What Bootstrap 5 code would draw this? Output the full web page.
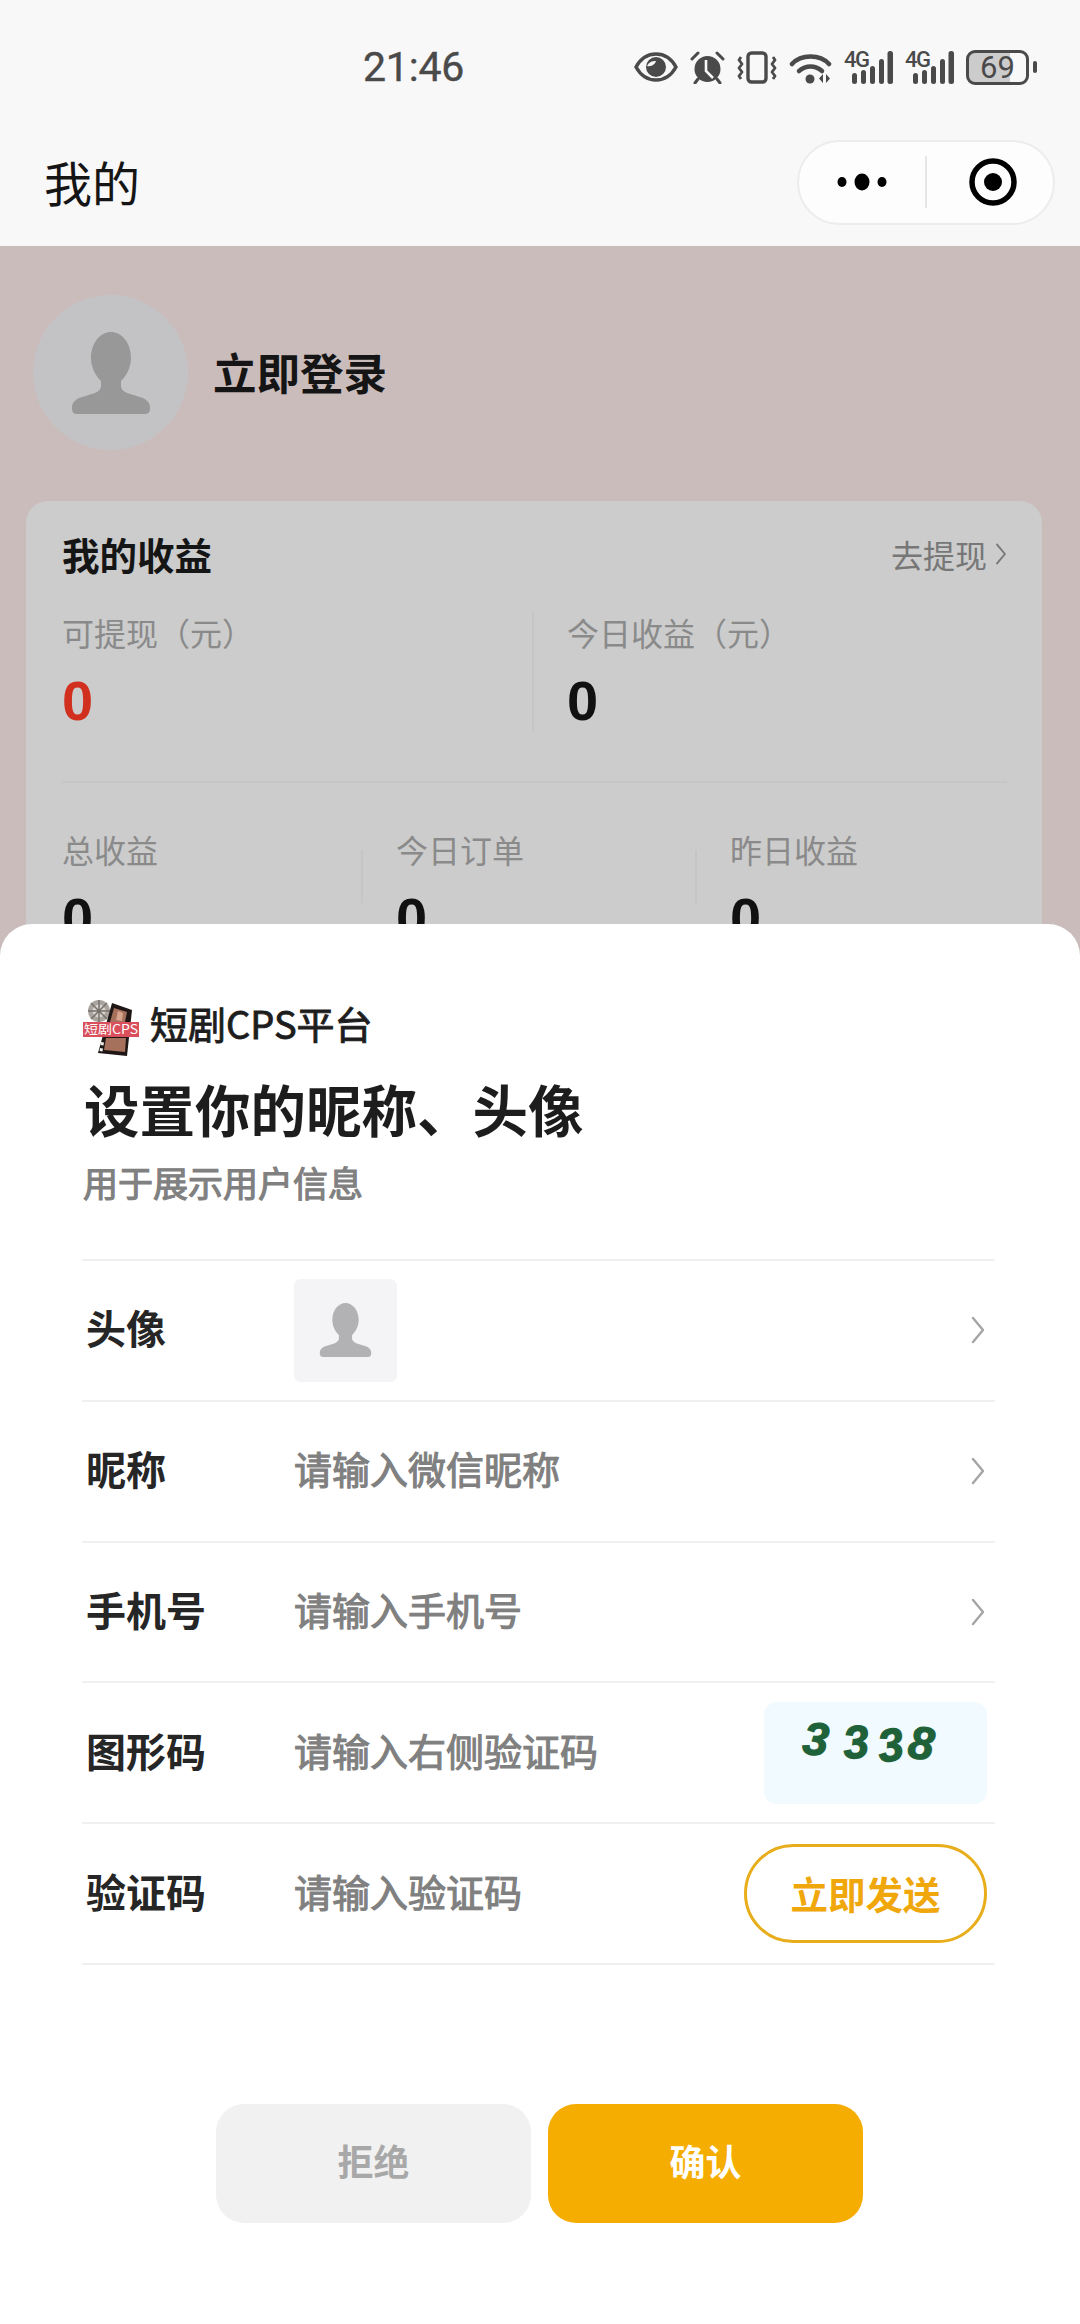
<!DOCTYPE html>
<html lang="zh-CN">
<head>
    <meta charset="utf-8">
    <title>我的</title>
    <link href="https://cdn.jsdelivr.net/npm/bootstrap@5.3.0/dist/css/bootstrap.min.css" rel="stylesheet">
    <style>
        html, body { height: 2324px; overflow: hidden; }
        body { position: relative; background: #cbbcbc; color: #111; font-family: "Noto Sans CJK SC", "Noto Sans", sans-serif; line-height: 1.2; }

        .top-area { background: #f8f8f8; }
        .status-row { height: 134px; color: #4a4a4a; }
        .clock { margin-left: 363px; font: 400 41px/1 Roboto, sans-serif; letter-spacing: -.2px; -webkit-text-stroke: .4px #4a4a4a; }
        .status-icons { margin-left: auto; margin-right: 43px; gap: 12px; }
        .status-icons svg { display: block; }
        .sig-wrap { position: relative; width: 49px; height: 33px; }
        .sig-text { position: absolute; left: 0; top: 0; font: 500 22px/18px Roboto, sans-serif; letter-spacing: -1.5px; }
        .batt-wrap { gap: 4px; }
        .batt-body { position: relative; width: 63px; height: 35px; border: 3px solid #4a4a4a; border-radius: 9px; background: linear-gradient(to right, #ccc 72%, transparent 72%); font: 400 31px/29px Roboto, sans-serif; text-align: center; }
        .batt-nub { width: 4px; height: 12px; background: #4a4a4a; border-radius: 2px; }
        .title-row { height: 112px; padding: 0 25px 16px 44px; }
        .page-title { font-size: 48px; font-weight: 400; color: #151515; }
        .capsule { width: 258px; height: 85px; background: #fdfdfd; border: 2px solid #ececec; border-radius: 43px; }
        .capsule-part { width: 127px; }
        .capsule-part + .capsule-rule + .capsule-part { padding-left: 6px; }
        .capsule-rule { width: 2px; height: 52px; background: #e6e6e6; }

        .me-area { padding: 49px 38px 0 26px; }
        .me-avatar { width: 155px; height: 155px; margin-left: 7px; background: #c3c3c5; border-radius: 50%; }
        .me-name { margin-left: 25px; font-size: 43.5px; font-weight: 700; color: #151515; }
        .earn-card { margin-top: 51px; height: 600px; padding: 31px 35px 0 36px; background: #ccc; border: 0; border-radius: 22px; }
        .earn-title { font-size: 37.5px; font-weight: 700; line-height: 44px; color: #151515; }
        .earn-link { font-size: 32px; line-height: 44px; color: #777; }
        .earn-label { font-size: 32px; line-height: 40px; color: #8a8a8a; white-space: nowrap; }
        .earn-value { margin-top: 19px; font: 700 56px/60px "Liberation Sans", sans-serif; color: #111; }
        .earn-value.is-red { color: #d2301f; }
        .stat-top { margin-top: 36px; }
        .stat-big { width: 470px; height: 119px; flex: none; }
        .stat-big + .stat-big { width: 470px; padding-left: 33px; border-left: 2px solid #c5c5c5; }
        .stat-small { width: 299px; flex: none; }
        .stat-rule { width: 2px; height: 53px; margin: 21px 33px 0 0; background: #c5c5c5; flex: none; }
        .earn-hr { height: 2px; margin: 50px 0 46px; background: #c6c6c6; }

        .sheet { position: absolute; left: 0; right: 0; top: 924px; bottom: 0; padding: 74px 85px 0 82px; background: #fff; border-radius: 32px 32px 0 0; }
        .brand-logo { margin-left: -2px; }
        .brand-name { margin: 0 0 13px 10px; font-size: 38px; font-weight: 400; -webkit-text-stroke: .9px #1d1d1d; color: #1d1d1d; }
        .sheet-title { margin: 12px 0 0 2px; font-size: 55.5px; font-weight: 700; line-height: 72px; color: #1d1d1d; }
        .sheet-sub { margin: 16px 0 0 1px; font-size: 35px; font-weight: 400; -webkit-text-stroke: 1.1px #808080; line-height: 44px; color: #808080; }

        .field-list { margin-top: 55px; border-top: 2px solid #f0f0f0; }
        .field-line { height: 140.8px; padding: 0 8px 0 4px; border-bottom: 2px solid #f0f0f0; }
        .field-name { width: 208px; flex: none; margin-bottom: 6px; font-size: 40px; font-weight: 700; color: #262626; }
        .field-hint { margin-bottom: 6px; font-size: 38px; font-weight: 400; -webkit-text-stroke: 1.1px #808080; color: #808080; }
        .pic-tile { width: 103px; height: 103px; background: #f4f4f6; border-radius: 7px; }
        .chev-right { margin-left: auto; margin-right: 2px; color: #a5a5a5; }
        .captcha-tile { width: 223px; height: 102px; margin-left: auto; padding: 15px 0 0 39px; background: #f1fafe; border-radius: 13px; font: italic 700 46px/46px "Liberation Sans", sans-serif; color: #1f6239; -webkit-text-stroke: 1.2px #1f6239; }
        .captcha-tile span { display: inline-block; }
        .cd-a { transform: rotate(6deg) translateY(-1px); }
        .cd-b { margin-left: 14px; transform: rotate(-5deg) translateY(2px); }
        .cd-c { margin-left: 9px; transform: rotate(-8deg) translateY(5px); }
        .cd-d { margin-left: 6px; transform: rotate(7deg) translateY(3px); }
        .send-btn { width: 243px; height: 99px; margin-left: auto; padding: 0; font-size: 37.5px; font-weight: 700; color: #f0a70c; background: #fff; border: 3px solid #e8ad1a; border-radius: 50px; }

        .sheet-actions { margin: 139px 0 0 134px; gap: 17px; }
        .act-btn { width: 315px; height: 119px; padding: 0 0 6px; font-size: 36px; font-weight: 700; border: 0; border-radius: 28px; }
        .act-no { background: #f1f1f1; color: #a8a8a8; }
        .act-yes { background: #f6ad02; color: #fff; }
    </style>
</head>
<body>
    <svg width="0" height="0" class="d-block position-absolute">
        <symbol id="person" viewBox="0 0 78 82">
            <path d="M39 0C29 0 19 10 19 26c0 10 5 18 10 23v5c0 3-2 5-6 7L7 66c-4 2-7 5-7 9v2c0 3 2 5 5 5h68c3 0 5-2 5-5v-2c0-4-3-7-7-9l-16-5c-4-2-6-4-6-7v-5c5-5 10-13 10-23C59 10 49 0 39 0z"/>
        </symbol>
        <symbol id="chev" viewBox="0 0 14 28">
            <path d="M2 2l10 12L2 26" fill="none" stroke="currentColor" stroke-width="2.4" stroke-linecap="round" stroke-linejoin="round"/>
        </symbol>
        <symbol id="signal" viewBox="0 0 49 33">
            <g fill="#4a4a4a">
                <rect x="8" y="22" width="5" height="11" rx="2.5"/>
                <rect x="17" y="19" width="5" height="14" rx="2.5"/>
                <rect x="26" y="15" width="5" height="18" rx="2.5"/>
                <rect x="35" y="8" width="5" height="25" rx="2.5"/>
                <rect x="43.500" y="0" width="5.500" height="33" rx="2.5"/>
            </g>
        </symbol>
    </svg>

    <div class="top-area">
        <div class="status-row d-flex align-items-center">
            <span class="clock">21:46</span>
            <div class="status-icons d-flex align-items-center">
                <!-- eye -->
                <svg width="44" height="30" viewBox="0 0 44 30">
                    <path d="M2 15C7 6 14 2 22 2s15 4 20 13c-5 9-12 13-20 13S7 24 2 15z" fill="none" stroke="#4a4a4a" stroke-width="3.500" stroke-linejoin="round"/>
                    <circle cx="22" cy="15" r="10" fill="#4a4a4a"/>
                    <path d="M13 14c2-4 5-5 9-5-1 3-4 6-9 5z" fill="#f8f8f8"/>
                </svg>
                <!-- alarm -->
                <svg width="35" height="33" viewBox="0 0 35 33">
                    <circle cx="17.500" cy="18" r="13" fill="#4a4a4a"/>
                    <path d="M2 8l6-6M33 8l-6-6M8 28l-3 4M27 28l3 4" stroke="#4a4a4a" stroke-width="3" stroke-linecap="round"/>
                    <path d="M16 9v11l7 7" fill="none" stroke="#f8f8f8" stroke-width="2.600"/>
                </svg>
                <!-- vibrate -->
                <svg width="40" height="33" viewBox="0 0 40 33">
                    <rect x="11" y="2" width="18" height="29" rx="3.500" fill="none" stroke="#4a4a4a" stroke-width="3.400"/>
                    <path d="M4 6l-2 3 3 4-3 4 3 4-3 4 2 3M36 6l2 3-3 4 3 4-3 4 3 4-2 3" fill="none" stroke="#4a4a4a" stroke-width="2.800" stroke-linejoin="round"/>
                </svg>
                <!-- wifi -->
                <svg width="43" height="33" viewBox="0 0 43 33">
                    <g fill="none" stroke="#4a4a4a" stroke-width="4.500" stroke-linecap="round">
                        <path d="M3 13C12 3 31 3 40 13"/>
                        <path d="M10 20c7-6 16-6 23 0"/>
                    </g>
                    <circle cx="21" cy="28" r="4.500" fill="#4a4a4a"/>
                    <path d="M34 23v9l-4-4.500zM37 23v9l4-4.500z" fill="#4a4a4a"/>
                </svg>
                <div class="sig-wrap"><span class="sig-text">4G</span><svg width="49" height="33"><use href="#signal"/></svg></div>
                <div class="sig-wrap"><span class="sig-text">4G</span><svg width="49" height="33"><use href="#signal"/></svg></div>
                <!-- battery -->
                <div class="batt-wrap d-flex align-items-center">
                    <div class="batt-body">69</div>
                    <div class="batt-nub"></div>
                </div>
            </div>
        </div>
        <div class="title-row d-flex align-items-center justify-content-between">
            <span class="page-title">我的</span>
            <div class="capsule d-flex align-items-center">
                <div class="capsule-part d-flex justify-content-center">
                    <svg width="50" height="20" viewBox="0 0 50 20" fill="#000">
                        <ellipse cx="5" cy="10" rx="4.500" ry="5"/>
                        <ellipse cx="25" cy="10" rx="7.500" ry="8.500"/>
                        <ellipse cx="45" cy="10" rx="4.500" ry="5"/>
                    </svg>
                </div>
                <div class="capsule-rule"></div>
                <div class="capsule-part d-flex justify-content-center">
                    <svg width="48" height="48" viewBox="0 0 48 48">
                        <circle cx="24" cy="24" r="21" fill="none" stroke="#000" stroke-width="5.500"/>
                        <circle cx="24" cy="24" r="9" fill="#000"/>
                    </svg>
                </div>
            </div>
        </div>
    </div>

    <div class="me-area">
        <div class="d-flex align-items-center">
            <div class="me-avatar d-flex align-items-center justify-content-center">
                <svg width="78" height="82" fill="#989898"><use href="#person"/></svg>
            </div>
            <span class="me-name">立即登录</span>
        </div>

        <div class="card earn-card">
            <div class="d-flex justify-content-between align-items-center">
                <span class="earn-title">我的收益</span>
                <span class="earn-link d-flex align-items-center gap-2">去提现<svg width="12" height="22"><use href="#chev"/></svg></span>
            </div>
            <div class="stat-top d-flex">
                <div class="stat-big">
                    <div class="earn-label">可提现（元）</div>
                    <div class="earn-value is-red">0</div>
                </div>
                <div class="stat-big">
                    <div class="earn-label">今日收益（元）</div>
                    <div class="earn-value">0</div>
                </div>
            </div>
            <div class="earn-hr"></div>
            <div class="d-flex">
                <div class="stat-small">
                    <div class="earn-label">总收益</div>
                    <div class="earn-value">0</div>
                </div>
                <div class="stat-rule"></div>
                <div class="stat-small">
                    <div class="earn-label">今日订单</div>
                    <div class="earn-value">0</div>
                </div>
                <div class="stat-rule"></div>
                <div class="stat-small">
                    <div class="earn-label">昨日收益</div>
                    <div class="earn-value">0</div>
                </div>
            </div>
        </div>
    </div>

    <div class="sheet">
        <div class="d-flex align-items-center">
            <!-- app logo: reel, film strip, red label -->
            <svg width="60" height="62" viewBox="0 0 58 62" class="brand-logo flex-shrink-0">
                <circle cx="18" cy="13" r="11" fill="#a9a59e"/>
                <circle cx="18" cy="13" r="6.500" fill="#d9d6cf"/>
                <path d="M18 2v22M7 13h22M10 5l16 16M26 5L10 21" stroke="#77726c" stroke-width="1.500"/>
                <path d="M31 5l20 7-5 46-29-3z" fill="#1f1715"/>
                <path d="M33 10l13 4-2 10H29zM25 40h20l-1 14-21-2z" fill="#a5705c"/>
                <path d="M37 13l5 2-1 8-6-1z" fill="#d7a48d"/>
                <path d="M19 50l3 .500-.500 3-3-.500zM20 44l3 .500-.500 3-3-.500z" fill="#eee"/>
                <rect x="2" y="24" width="56" height="15" fill="#d9505c"/>
                <text x="30" y="36" text-anchor="middle" font-family="Noto Sans CJK SC, sans-serif" font-size="12.500" fill="#fff" textLength="54" lengthAdjust="spacingAndGlyphs">短剧CPS</text>
            </svg>
            <span class="brand-name">短剧CPS平台</span>
        </div>
        <h1 class="sheet-title">设置你的昵称、头像</h1>
        <p class="sheet-sub">用于展示用户信息</p>

        <div class="field-list">
            <div class="field-line d-flex align-items-center">
                <span class="field-name">头像</span>
                <div class="pic-tile d-flex align-items-center justify-content-center">
                    <svg width="53" height="54" fill="#b2b2b4"><use href="#person"/></svg>
                </div>
                <svg width="14" height="28" class="chev-right"><use href="#chev"/></svg>
            </div>
            <div class="field-line d-flex align-items-center">
                <span class="field-name">昵称</span>
                <span class="field-hint">请输入微信昵称</span>
                <svg width="14" height="28" class="chev-right"><use href="#chev"/></svg>
            </div>
            <div class="field-line d-flex align-items-center">
                <span class="field-name">手机号</span>
                <span class="field-hint">请输入手机号</span>
                <svg width="14" height="28" class="chev-right"><use href="#chev"/></svg>
            </div>
            <div class="field-line d-flex align-items-center">
                <span class="field-name">图形码</span>
                <span class="field-hint">请输入右侧验证码</span>
                <div class="captcha-tile"><span class="cd-a">3</span><span class="cd-b">3</span><span class="cd-c">3</span><span class="cd-d">8</span></div>
            </div>
            <div class="field-line d-flex align-items-center">
                <span class="field-name">验证码</span>
                <span class="field-hint">请输入验证码</span>
                <button type="button" class="btn send-btn">立即发送</button>
            </div>
        </div>

        <div class="sheet-actions d-flex">
            <button type="button" class="btn act-btn act-no">拒绝</button>
            <button type="button" class="btn act-btn act-yes">确认</button>
        </div>
    </div>

    <script src="https://cdn.jsdelivr.net/npm/bootstrap@5.3.0/dist/js/bootstrap.bundle.min.js"></script>
</body>
</html>
